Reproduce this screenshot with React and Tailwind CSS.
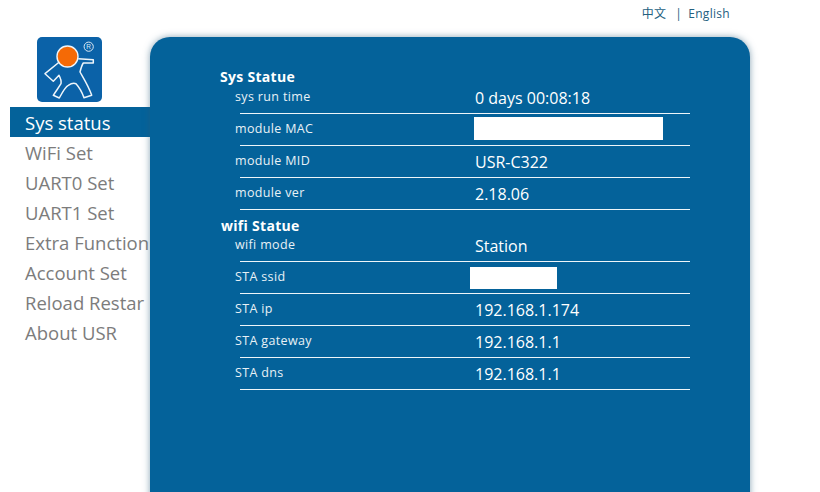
const font = { fontFamily: '"Open Sans", "Noto Sans", "Noto Sans CJK SC", sans-serif' };

function Logo() {
  return (
    <svg width="65" height="65" viewBox="0 0 65 65" className="block">
      <rect width="65" height="65" rx="5" fill="#0b62a8" />
      <path d="M22.3 25 L8 36.7 L16.3 44.3 L22 38.3 C23.5 41 24.5 44 24 46.7 C22 50 19 54 16.3 58.3 L22.3 61 C25 56 28 50 31.3 48.3 C34 46.5 37 46 39 46.7 C42 50 45 55 47 60.7 L54.7 58.3 C52 50 47 42 43 35 C44 31 45 28 46.3 26 L56.3 26 L56.3 22.7 L41.3 21.7" fill="none" stroke="#eef5fa" strokeWidth="1.5" strokeLinejoin="round" />
      <circle cx="30.5" cy="19.5" r="10.5" fill="#f56a06" stroke="#eef5fa" strokeWidth="1.4" />
      <circle cx="51.7" cy="9.7" r="4.6" fill="none" stroke="#dbe9f5" strokeWidth="1" />
      <text x="51.7" y="12" textAnchor="middle" fontSize="6.5" fill="#dbe9f5" fontFamily="Liberation Sans, sans-serif">R</text>
    </svg>
  );
}

function Row({ label, value, blank }) {
  return (
    <div className="h-8 relative flex">
      <div className="w-[255px] pl-[15px] pt-[6px] text-[12.5px] leading-[18px] text-[#e8f1f6] tracking-[0.35px]">{label}</div>
      {blank ? (
        <div className={blank} />
      ) : (
        <div className="pt-[5px] text-[16px] leading-[22px] text-white">{value}</div>
      )}
      <div className="absolute left-5 right-0 bottom-0 h-px bg-[#eef5f9]" />
    </div>
  );
}

const nav = ["WiFi Set", "UART0 Set", "UART1 Set", "Extra Function", "Account Set", "Reload Restar", "About USR"];

export default function App() {
  return (
    <div className="w-[820px] h-[492px] overflow-hidden bg-white" style={font}>
      <div className="h-[37px] flex justify-end pr-[90px] pt-[6px] text-[12px] leading-[16px] text-[#24607f] tracking-[0.3px]">
        <span>中文</span>
        <span className="ml-[9px] mr-[6px]">|</span>
        <span>English</span>
      </div>
      <div className="flex">
        <div className="w-[150px] shrink-0">
          <div className="pl-[37px] h-[70px]"><Logo /></div>
          <div className="ml-[10px] h-[30px] pl-[15px] bg-[#04629a] text-white text-[18.5px] leading-[31px]">Sys status</div>
          {nav.map((n) => (
            <div key={n} className="ml-[10px] h-[30px] pl-[15px] text-[#7c7c7c] text-[18.5px] leading-[31px] whitespace-nowrap">{n}</div>
          ))}
        </div>
        <div className="w-[600px] h-[500px] rounded-[20px] bg-[#04629a] shadow-[0_0_7px_rgba(40,90,120,0.55)] pl-[70px] pr-[60px] pt-[31px]">
          <div className="h-[14px] text-[14px] leading-[18px] font-bold text-white tracking-[0.3px]">Sys Statue</div>
          <Row label="sys run time" value="0 days 00:08:18" />
          <Row label="module MAC" blank="w-[189px] h-[23px] mt-[3px] ml-[-1px] bg-white" />
          <Row label="module MID" value="USR-C322" />
          <Row label="module ver" value="2.18.06" />
          <div className="h-[20px] pt-[7px] pl-px text-[14px] leading-[18px] font-bold text-white tracking-[0.3px]">wifi Statue</div>
          <Row label="wifi mode" value="Station" />
          <Row label="STA ssid" blank="w-[87px] h-[22px] mt-[5px] ml-[-5px] bg-white" />
          <Row label="STA ip" value="192.168.1.174" />
          <Row label="STA gateway" value="192.168.1.1" />
          <Row label="STA dns" value="192.168.1.1" />
        </div>
      </div>
    </div>
  );
}
